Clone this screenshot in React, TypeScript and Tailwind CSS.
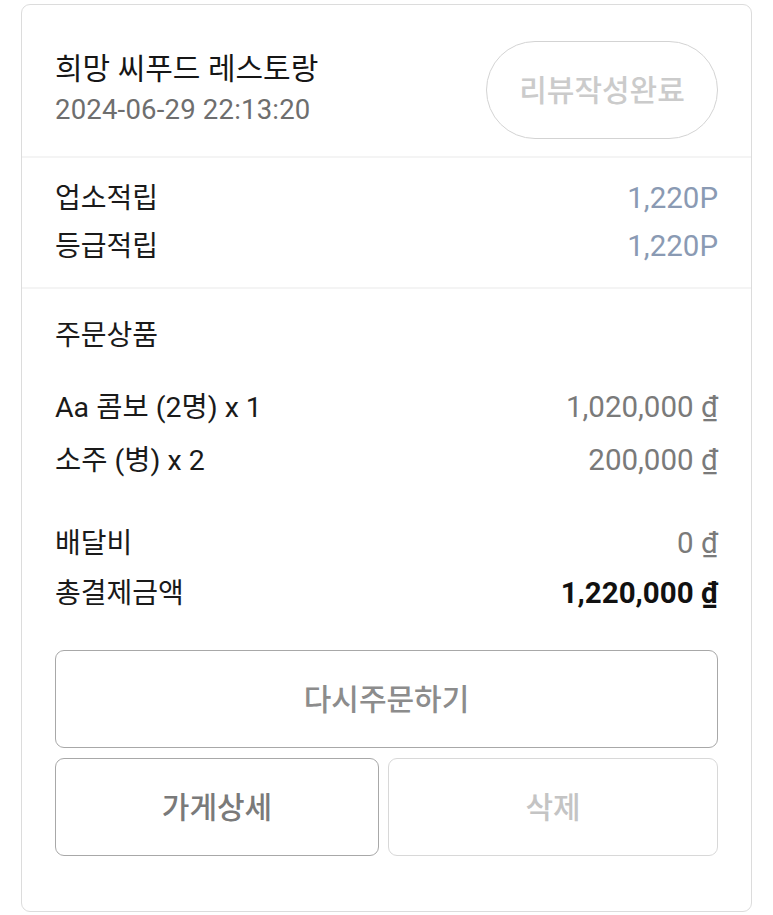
const FONT = 'font-["Roboto","Noto_Sans_CJK_KR",sans-serif]'

const POINTS = [
  { label: '업소적립', value: '1,220P' },
  { label: '등급적립', value: '1,220P' },
]

const ITEMS = [
  { name: 'Aa 콤보 (2명) x 1', price: '1,020,000 ₫' },
  { name: '소주 (병) x 2', price: '200,000 ₫' },
]

export default function App() {
  return (
    <div className={`${FONT} bg-white min-h-[915px] px-[21px] pt-[4px]`}>
      <div className="border border-[#dcdcdc] rounded-[9px] overflow-hidden">
        {/* header */}
        <div className="flex items-center justify-between pl-[33px] pr-[33px] pt-[36px] pb-[17px]">
          <div className="flex flex-col">
            <span className="text-[30px] leading-[40px] text-[#161616]">희망 씨푸드 레스토랑</span>
            <span className="text-[27.5px] leading-[42px] text-[#6e6e6e] tracking-[0.2px]">2024-06-29 22:13:20</span>
          </div>
          <button className="w-[232px] h-[98px] rounded-full border border-[#d3d3d3] text-[30px] font-medium text-[#cbcbcb]">
            리뷰작성완료
          </button>
        </div>

        {/* points */}
        <div className="border-t-2 border-[#f4f4f4] px-[33px] pt-[17px] pb-[16px]">
          {POINTS.map((p) => (
            <div key={p.label} className="flex items-center justify-between h-[48px] leading-none">
              <span className="text-[28px] text-[#1a1a1a]">{p.label}</span>
              <span className="text-[29.5px] text-[#8a9ab3]">{p.value}</span>
            </div>
          ))}
        </div>

        {/* order */}
        <div className="border-t-2 border-[#f4f4f4] px-[33px] pt-[23px] pb-[55px]">
          <div className="flex items-center h-[48px] leading-none">
            <span className="text-[28px] text-[#1a1a1a]">주문상품</span>
          </div>
          <div className="mt-[23px] space-y-[3px]">
            {ITEMS.map((it) => (
              <div key={it.name} className="flex items-center justify-between h-[50px] leading-none">
                <span className="text-[28.5px] text-[#1a1a1a]">{it.name}</span>
                <span className="text-[29.5px] text-[#7a7a7a]">{it.price}</span>
              </div>
            ))}
          </div>
          <div className="mt-[33px]">
            <div className="flex items-center justify-between h-[50px] leading-none">
              <span className="text-[28px] text-[#1a1a1a]">배달비</span>
              <span className="text-[29.5px] text-[#7a7a7a]">0 ₫</span>
            </div>
            <div className="flex items-center justify-between h-[50px] leading-none">
              <span className="text-[28px] text-[#1a1a1a]">총결제금액</span>
              <span className="text-[29.5px] font-bold text-[#111]">1,220,000 ₫</span>
            </div>
          </div>

          <button className="mt-[31px] w-full h-[98px] rounded-[9px] border-[1.5px] border-[#a8a8a8] text-[30px] font-medium text-[#8c8c8c]">
            다시주문하기
          </button>
          <div className="flex gap-[9px] mt-[10px]">
            <button className="w-[324px] h-[98px] rounded-[9px] border-[1.5px] border-[#a8a8a8] text-[30px] font-medium text-[#7a7a7a]">
              가게상세
            </button>
            <button className="flex-1 h-[98px] rounded-[9px] border-[1.5px] border-[#d8d8d8] text-[30px] font-medium text-[#c4c4c4]">
              삭제
            </button>
          </div>
        </div>
      </div>
    </div>
  )
}
